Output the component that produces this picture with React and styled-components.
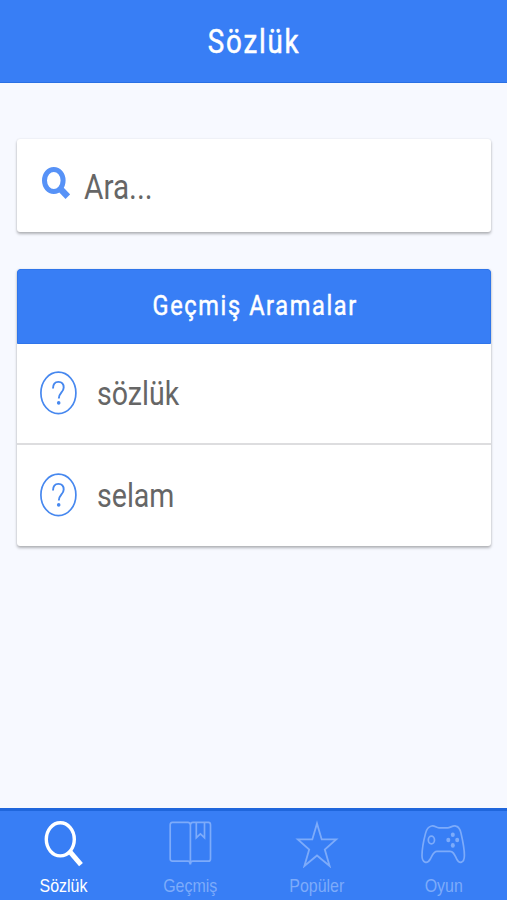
import React from "react";
import styled, { createGlobalStyle } from "styled-components";

const Global = createGlobalStyle`
  * { box-sizing: border-box; }
  body { margin: 0; background: #f7f9ff; }
`;

const Screen = styled.div`
  display: flex;
  flex-direction: column;
  height: 900px;
  width: 507px;
  overflow: hidden;
  background: #f7f9ff;
  font-family: Roboto, sans-serif;
`;

const Header = styled.header`
  flex: none;
  display: flex;
  justify-content: center;
  height: 83px;
  padding: 22px 0 0 2px;
  background: #387ef5;
  border-bottom: 1px solid #2a70e4;
`;

/* Condensed lettering: glyphs are narrowed around the given origin. */
const Condensed = styled.span`
  display: block;
  white-space: nowrap;
  transform: scaleX(${(p) => p.$x});
  transform-origin: ${(p) => p.$origin || "center"} center;
`;

const Title = styled(Condensed).attrs({ as: "h1" })`
  margin: 0;
  color: #fff;
  font-size: 33px;
  line-height: 40px;
  font-weight: 400;
  letter-spacing: 2.1px;
  -webkit-text-stroke: 0.5px #fff;
`;

const Main = styled.main`
  flex: 1;
  display: flex;
  flex-direction: column;
  gap: 37px;
  padding: 56px 16px 0 16.5px;
`;

const Card = styled.section`
  background: #fff;
  border-radius: 3px;
  overflow: hidden;
  box-shadow: 0 2px 3px rgba(0, 0, 0, 0.28), 0 0 2px rgba(0, 0, 0, 0.1);
`;

const SearchCard = styled(Card)`
  display: flex;
  align-items: flex-start;
  height: 92.5px;
  padding: 27px 0 0 24px;
`;

const Placeholder = styled(Condensed)`
  margin: 1px 0 0 14.5px;
  color: #666;
  font-size: 35px;
  line-height: 42px;
`;

const CardHeader = styled.div`
  display: flex;
  justify-content: center;
  height: 75px;
  padding: 19px 0 0 2px;
  background: #387ef5;
  border: 1px solid #2f75ea;
  border-radius: 3px 3px 0 0;
`;

const CardTitle = styled(Condensed).attrs({ as: "h2" })`
  margin: 0;
  color: #fff;
  font-size: 28px;
  line-height: 34px;
  font-weight: 400;
  letter-spacing: 1.95px;
  -webkit-text-stroke: 0.5px #fff;
`;

const Item = styled.div`
  display: flex;
  align-items: center;
  height: 99.5px;
  padding-left: 22.5px;

  & + & {
    border-top: 2px solid #dddddf;
    height: 102.5px;
  }
`;

const ItemText = styled(Condensed)`
  margin-left: 20px;
  color: #666;
  font-size: 34px;
  line-height: 42px;
`;

const Tabs = styled.nav`
  flex: none;
  display: grid;
  grid-template-columns: repeat(4, 126.5px);
  height: 92px;
  padding-left: 0.5px;
  background: #387ef5;
  border-top: 3px solid #1f66dc;
`;

const Tab = styled.div`
  display: flex;
  flex-direction: column;
  align-items: center;
  padding-top: 7px;
  color: ${(p) => (p.$active ? "#fff" : "#7dabfa")};

  svg { flex: none; }
`;

const TabLabel = styled(Condensed)`
  margin-top: 7px;
  font-family: "Liberation Sans", Arial, sans-serif;
  font-size: 19px;
  line-height: 22px;
`;

const SearchSmall = () => (
  <svg width="29" height="34" viewBox="0 0 29 34" fill="none" stroke="#5792f7">
    <ellipse cx="12.8" cy="14.5" rx="9.3" ry="11" strokeWidth="5" />
    <path d="M18.3 21.8 26.8 30.7" strokeWidth="6.4" />
  </svg>
);

const Question = () => (
  <svg width="38" height="46" viewBox="0 0 38 46" fill="none" stroke="#4788ef" strokeWidth="1.7">
    <ellipse cx="19.4" cy="22.9" rx="17.5" ry="20.7" />
    <path d="M14 18.6C14 14.1 16 11.9 19.4 11.9S24.7 14.2 24.7 17.6C24.7 22.4 19.8 22.6 19.8 28.6" strokeWidth="1.9" />
    <circle cx="19.7" cy="32.9" r="1.8" fill="#4788ef" stroke="none" />
  </svg>
);

const icons = {
  search: (
    <>
      <ellipse cx="20.3" cy="21.3" rx="14" ry="16.6" strokeWidth="3.4" />
      <path d="M29.6 33.4 41 46.6" strokeWidth="5" />
    </>
  ),
  book: (
    <>
      <path d="M24.2 46.5C24.2 44 23.6 43.2 22 43.2H6.3Q4.2 43.2 4.2 40.7V6.8Q4.2 4.3 6.3 4.3H22Q24 4.3 24.4 6.8Q24.8 4.3 26.8 4.3H42.5Q44.5 4.3 44.5 6.8V40.7Q44.5 43.2 42.5 43.2H26.8Q24.4 43.2 24.4 46.5V6.8" strokeWidth="1.7" />
      <path d="M30.3 4.3V19.7L34.4 15.8 38.5 19.7V4.3" strokeWidth="1.7" />
    </>
  ),
  star: (
    <path d="M24 5.5 28.7 21.4H43.2L31.8 31.5 36.6 48 24 37.5 11.4 48 16.2 31.5 4.8 21.4H19.3Z" strokeWidth="1.8" />
  ),
  game: (
    <>
      <path d="M12.5 8C15.5 7 17 9.8 20 9.8H28.5C31.5 9.8 33.5 7.2 37 8.1C40 8.8 41.2 11.4 42 15.1C43.5 21.6 45.5 31.6 45.4 37.6C45.3 45.6 40.2 46.1 37.6 40.8C35.5 36.6 34.5 33.4 31 33.4H18C14.5 33.4 13.5 37 11.3 41C8.3 46.3 3 45.2 3 37.6C3 31.6 5 21.1 6.6 15.1C7.7 10.8 9.2 8.8 12.5 8Z" strokeWidth="1.7" />
      <ellipse cx="12.4" cy="22" rx="3.1" ry="3.8" strokeWidth="1.7" />
      <g fill="currentColor" stroke="none">
        <ellipse cx="33.8" cy="16.8" rx="2" ry="2.3" />
        <ellipse cx="29.3" cy="22" rx="2" ry="2.3" />
        <ellipse cx="38.2" cy="22" rx="2" ry="2.3" />
        <ellipse cx="33.8" cy="27.4" rx="2" ry="2.3" />
      </g>
    </>
  ),
};

const TabIcon = ({ name }) => (
  <svg width="48" height="50" viewBox="0 0 48 50" fill="none" stroke="currentColor">
    {icons[name]}
  </svg>
);

const tabs = [
  { name: "search", label: "Sözlük", active: true },
  { name: "book", label: "Geçmiş" },
  { name: "star", label: "Popüler" },
  { name: "game", label: "Oyun" },
];

export default function App() {
  return (
    <Screen>
      <Global />
      <Header>
        <Title $x={0.84}>Sözlük</Title>
      </Header>
      <Main>
        <SearchCard>
          <SearchSmall />
          <Placeholder $x={0.85} $origin="left">Ara...</Placeholder>
        </SearchCard>
        <Card>
          <CardHeader>
            <CardTitle $x={0.84}>Geçmiş Aramalar</CardTitle>
          </CardHeader>
          {["sözlük", "selam"].map((word) => (
            <Item key={word}>
              <Question />
              <ItemText $x={0.84} $origin="left">{word}</ItemText>
            </Item>
          ))}
        </Card>
      </Main>
      <Tabs>
        {tabs.map((t) => (
          <Tab key={t.label} $active={t.active}>
            <TabIcon name={t.name} />
            <TabLabel $x={0.84}>{t.label}</TabLabel>
          </Tab>
        ))}
      </Tabs>
    </Screen>
  );
}
